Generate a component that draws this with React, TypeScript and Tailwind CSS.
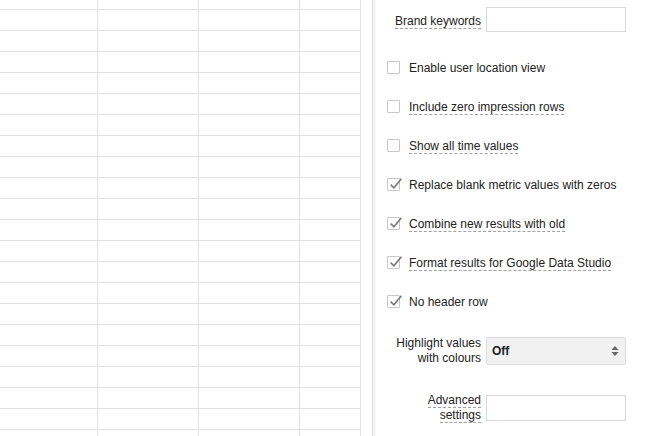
import React from "react";

const FONT = { fontFamily: '"Liberation Sans", Arial, sans-serif' };

const COLS = ["w-[98px]", "w-[101px]", "w-[101px]", "w-[61px]"];

function SheetGrid() {
  const rows = Array.from({ length: 22 });
  return (
    <div className="flex flex-col w-[361px] shrink-0">
      {rows.map((_, r) => (
        <div
          key={r}
          className={`flex shrink-0 ${r === 0 ? "h-[9px]" : "h-[21px] border-t border-[#e2e2e2]"}`}
        >
          {COLS.map((w, c) => (
            <div key={c} className={`${w} h-full border-r border-[#e2e2e2]`} />
          ))}
        </div>
      ))}
    </div>
  );
}

function Dotted({ children, on }: { children: React.ReactNode; on?: boolean }) {
  if (!on) return <span>{children}</span>;
  return (
    <span className="border-b border-dashed border-[#a0a0a0] leading-[14px] inline-block">{children}</span>
  );
}

function Check({ checked }: { checked: boolean }) {
  return (
    <span className="w-[13px] h-[13px] border border-[#c8c8c8] bg-white relative shrink-0 rounded-[1px]">
      {checked && (
        <svg viewBox="0 0 14 14" className="absolute left-[0px] top-[-3px] w-[15px] h-[15px]">
          <path d="M2.5 8 L5.5 11 L12.5 2.5" fill="none" stroke="#7a7a7a" strokeWidth="1.5" />
        </svg>
      )}
    </span>
  );
}

const OPTIONS: { label: string; checked: boolean; dotted: boolean }[] = [
  { label: "Enable user location view", checked: false, dotted: false },
  { label: "Include zero impression rows", checked: false, dotted: true },
  { label: "Show all time values", checked: false, dotted: true },
  { label: "Replace blank metric values with zeros", checked: true, dotted: false },
  { label: "Combine new results with old", checked: true, dotted: true },
  { label: "Format results for Google Data Studio", checked: true, dotted: true },
  { label: "No header row", checked: true, dotted: false },
];

function SettingsPanel() {
  return (
    <div className="flex-1 text-[12px] text-[#222] pl-[12px] pt-[7px] whitespace-nowrap">
      <div className="flex items-center h-[25px]">
        <div className="w-[99px] text-right pr-[5px] pt-[2px]">
          <Dotted on>Brand keywords</Dotted>
        </div>
        <div className="w-[140px] h-[25px] border border-[#d9d9d9] bg-white" />
      </div>

      <div className="flex flex-col mt-[16px]">
        {OPTIONS.map((o) => (
          <div key={o.label} className="flex items-center h-[39px]">
            <Check checked={o.checked} />
            <span className="ml-[9px]">
              <Dotted on={o.dotted}>{o.label}</Dotted>
            </span>
          </div>
        ))}
      </div>

      <div className="flex items-center mt-[15px]">
        <div className="w-[99px] text-right pr-[5px] leading-[15px]">
          Highlight values
          <br />
          with colours
        </div>
        <div className="w-[140px] h-[28px] border border-[#dcdcdc] bg-[#f1f1f1] rounded-[2px] flex items-center justify-between pl-[5px] pr-[6px]">
          <span className="font-bold text-[#222]">Off</span>
          <svg viewBox="0 0 8 12" className="w-[8px] h-[12px]">
            <path d="M4 1 L7.5 5 L0.5 5 Z M4 11 L7.5 7 L0.5 7 Z" fill="#666" />
          </svg>
        </div>
      </div>

      <div className="flex items-center mt-[27px]">
        <div className="w-[99px] text-right pr-[5px] leading-[15px] flex flex-col items-end">
          <Dotted on>Advanced</Dotted>
          <Dotted on>settings</Dotted>
        </div>
        <div className="w-[140px] h-[26px] border border-[#d9d9d9] bg-white" />
      </div>
    </div>
  );
}

export default function App() {
  return (
    <div style={FONT} className="w-[656px] h-[436px] bg-white flex overflow-hidden">
      <SheetGrid />
      <div className="w-[11px] shrink-0" />
      <div className="w-[1px] shrink-0 bg-[#dcdcdc]" />
      <div className="w-[1px] shrink-0" />
      <div className="w-[1px] shrink-0 bg-[#e6e6e6]" />
      <SettingsPanel />
    </div>
  );
}
